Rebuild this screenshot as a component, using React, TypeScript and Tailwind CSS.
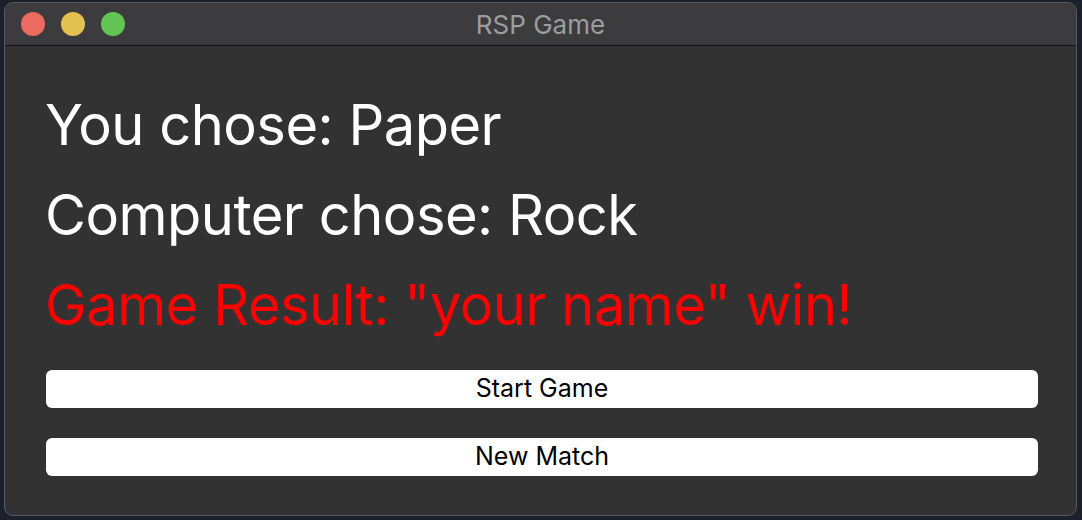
import React from "react";

const font = { fontFamily: "Inter, 'Noto Sans', sans-serif" };

function TrafficLights() {
  return (
    <div className="flex items-center gap-4 pl-4">
      <span className="h-6 w-6 rounded-full bg-[#ec6a5e]" />
      <span className="h-6 w-6 rounded-full bg-[#e3c04f]" />
      <span className="h-6 w-6 rounded-full bg-[#62c554]" />
    </div>
  );
}

export default function App() {
  return (
    <div className="h-[520px] w-[1082px] bg-[#1b212c] pt-[2px] pl-[4px]" style={font}>
      <div className="flex h-[514px] w-[1073px] flex-col overflow-hidden rounded-[9px] border border-[#5a5a5c] bg-[#323232]">
        <div className="relative flex h-[43px] shrink-0 items-center border-b border-[#141414] bg-[#3c3c3e]">
          <TrafficLights />
          <div className="absolute inset-0 flex items-center justify-center text-[26px] text-[#9d9d9f]">
            RSP Game
          </div>
        </div>
        <div className="flex flex-col pl-[40px] pr-[38px] pt-[34px]">
          <div className="text-[56px] leading-[90px] tracking-[-0.5px] text-white">You chose: Paper</div>
          <div className="text-[56px] leading-[90px] tracking-[-0.5px] text-white">Computer chose: Rock</div>
          <div className="text-[56px] leading-[90px] tracking-[-0.5px] text-[#fe0000]">Game Result: "your name" win!</div>
          <div className="mt-[20px] flex flex-col gap-[30px] pl-[1px]">
            <button className="h-[38px] rounded-[6px] bg-white text-[25px] text-black">Start Game</button>
            <button className="h-[38px] rounded-[6px] bg-white text-[25px] text-black">New Match</button>
          </div>
        </div>
      </div>
    </div>
  );
}
